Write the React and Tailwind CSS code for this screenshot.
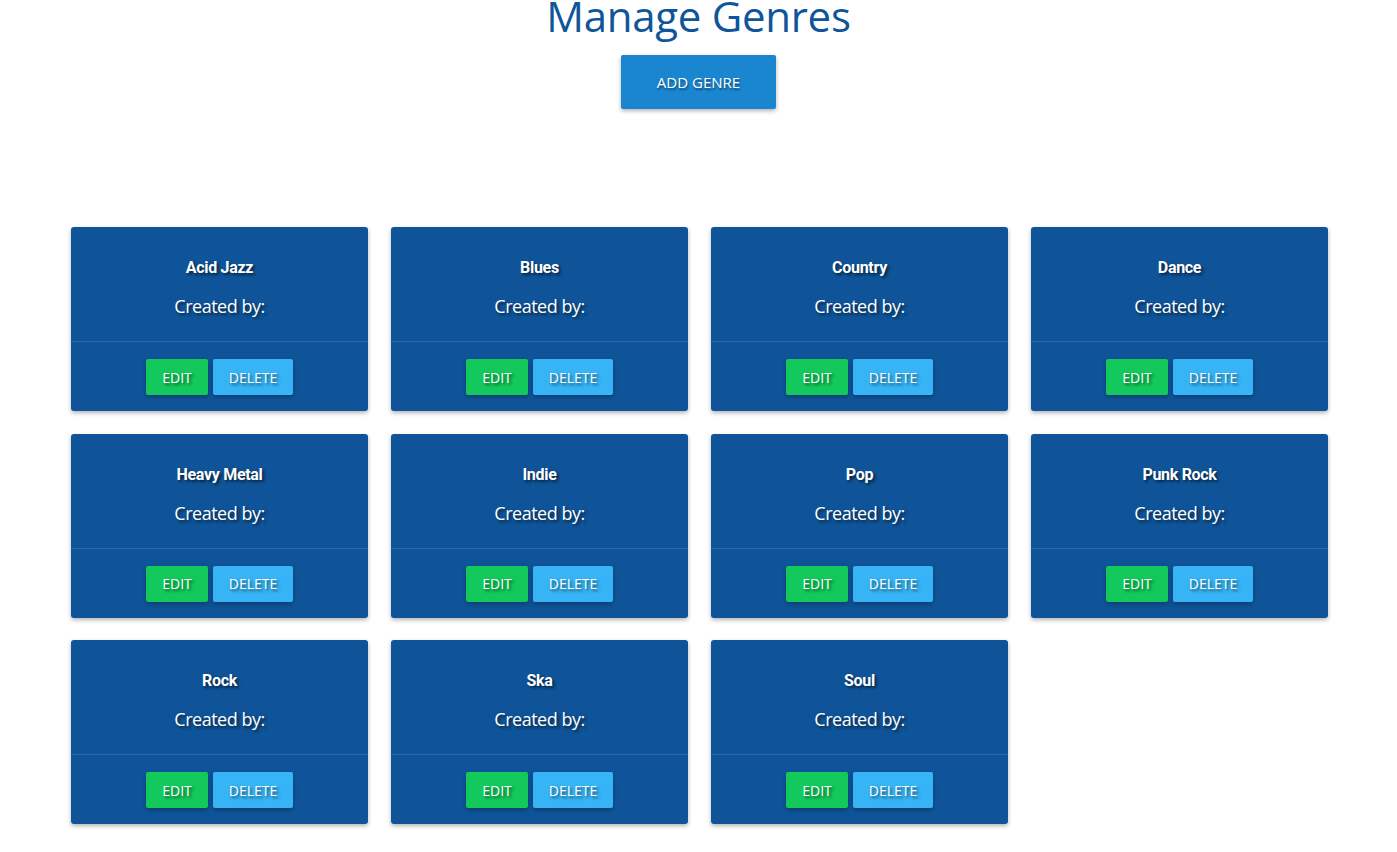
import React from "react";

const genres = [
  "Acid Jazz",
  "Blues",
  "Country",
  "Dance",
  "Heavy Metal",
  "Indie",
  "Pop",
  "Punk Rock",
  "Rock",
  "Ska",
  "Soul",
];

const shadow = "[text-shadow:2px_2px_3px_rgba(0,0,0,0.6)]";

const GenreCard = ({ name }) => (
  <div className="bg-[#0f5499] rounded-[3px] shadow-[0_2px_4px_rgba(0,0,0,0.3)] h-[184px] flex flex-col">
    <div className="h-[115px] flex flex-col items-center border-b border-[#2a67a8] text-white">
      <div
        className={`mt-[30px] text-[16px] leading-[22px] font-bold font-['Roboto',sans-serif] tracking-[-0.3px] ${shadow}`}
      >
        {name}
      </div>
      <div
        className={`mt-[15px] text-[18px] leading-[24px] font-['Open_Sans',sans-serif] tracking-[-0.5px] ${shadow}`}
      >
        Created by:
      </div>
    </div>
    <div className="flex justify-center gap-[5px] pt-[17px]">
      <button
        className={`w-[62px] h-[36px] bg-[#14c95c] rounded-[2px] text-white text-[14px] font-['Open_Sans',sans-serif] shadow-[0_2px_4px_rgba(0,0,0,0.3)] ${shadow}`}
      >
        EDIT
      </button>
      <button
        className={`w-[80px] h-[36px] bg-[#36b4f5] rounded-[2px] text-white text-[14px] font-['Open_Sans',sans-serif] shadow-[0_2px_4px_rgba(0,0,0,0.3)] ${shadow}`}
      >
        DELETE
      </button>
    </div>
  </div>
);

const App = () => {
  return (
    <div className="min-h-screen bg-white font-['Open_Sans',sans-serif]">
      <h1 className="text-center text-[#0f559a] text-[42px] leading-[56px] mt-[-12px] tracking-[-0.3px] font-['Open_Sans',sans-serif]">
        Manage Genres
      </h1>
      <div className="flex justify-center mt-[11px]">
        <button className="w-[155px] h-[54px] bg-[#1a86d0] rounded-[2px] text-white text-[15px] shadow-[0_2px_4px_rgba(0,0,0,0.3)] [text-shadow:1px_2px_2px_rgba(0,0,0,0.45)]">
          ADD GENRE
        </button>
      </div>
      <div className="w-[1257px] ml-[71px] mt-[118px] grid grid-cols-4 gap-x-[23px] gap-y-[22.5px] pb-8">
        {genres.map((g) => (
          <GenreCard key={g} name={g} />
        ))}
      </div>
    </div>
  );
};

export default App;
